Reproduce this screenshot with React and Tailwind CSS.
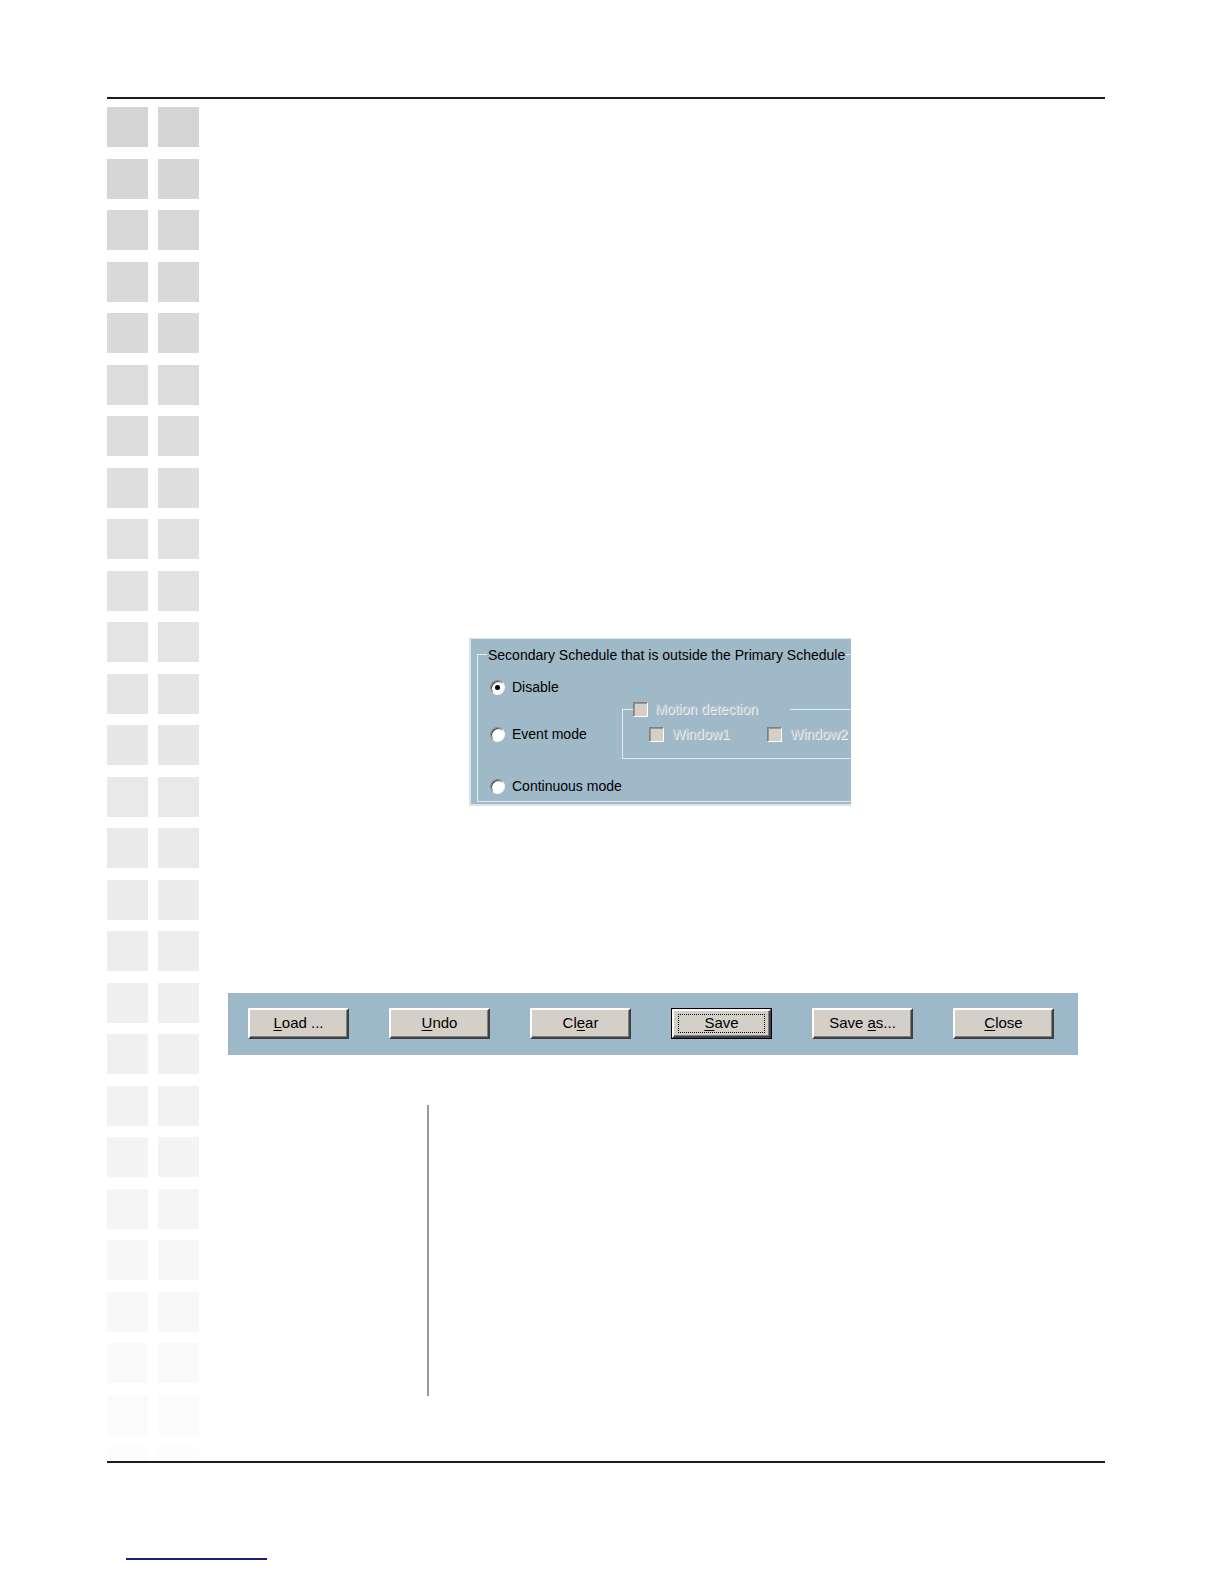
import React from 'react';

const PANEL = 'bg-[#a0b9c9]';

function Radio({ checked }) {
  return (
    <span className="inline-flex h-[15px] w-[15px] shrink-0 items-center justify-center rounded-full border border-t-[#7d8a92] border-l-[#7d8a92] border-r-[#f4f4f4] border-b-[#f4f4f4] bg-white shadow-[inset_1px_1px_0_#404040]">
      {checked && <span className="h-[5px] w-[5px] rounded-full bg-black" />}
    </span>
  );
}

function Check() {
  return (
    <span className="inline-block h-[15px] w-[15px] shrink-0 border border-t-[#808080] border-l-[#808080] border-r-white border-b-white bg-[#d4d0c8] shadow-[inset_1px_1px_0_#9a978f]" />
  );
}

function Dim({ children }) {
  return (
    <span className="text-[#bcc5ca] [text-shadow:1px_1px_0_#f2f4f5]">{children}</span>
  );
}

function Btn({ children, focused }) {
  const label = <span className="whitespace-pre">{children}</span>;
  return (
    <div className={`h-[31px] w-[101px] text-[15px] text-black ${focused ? 'border border-black' : ''}`}>
      <span className="flex h-full w-full items-center justify-center border-2 border-t-white border-l-white border-r-[#404040] border-b-[#404040] bg-[#d4d0c8] shadow-[inset_-1px_-1px_0_#808080]">
        {focused ? (
          <span className="flex h-[19px] w-[87px] items-center justify-center border border-dotted border-black">
            {label}
          </span>
        ) : (
          label
        )}
      </span>
    </div>
  );
}

const u = (s) => <span className="underline underline-offset-2">{s}</span>;

export default function App() {
  const rows = Array.from({ length: 27 }, (_, i) => i);

  return (
    <div className="w-full overflow-hidden bg-white pt-[97px] pb-[4px] font-['Liberation_Sans',Arial,sans-serif]">
      <div className="ml-[107px] h-[2px] w-[998px] bg-[#1c1c1c]" />

      <div className="ml-[107px] flex h-[1362px]">
        {/* decorative squares */}
        <div className="flex h-[1362px] w-[92px] shrink-0 flex-col gap-[11.5px] overflow-hidden pt-[8px]">
          {rows.map((i) => {
            const v = Math.round(212 + (i / 26) * 41);
            const c = `rgb(${v},${v},${v})`;
            return (
              <div key={i} className="flex shrink-0 gap-[10px]">
                <div className="h-[40px] w-[41px]" style={{ backgroundColor: c }} />
                <div className="h-[40px] w-[41px]" style={{ backgroundColor: c }} />
              </div>
            );
          })}
        </div>

        <div className="ml-[29px] flex w-[850px] flex-col">
          {/* schedule panel */}
          <div className={`ml-[241px] mt-[539px] h-[168px] w-[382px] overflow-hidden ${PANEL} border-l-2 border-b-2 border-t border-[#d9e4eb] pl-[6px] pt-[15px]`}>
            <div className="w-[420px] border-l border-t border-b border-[#e4ecf1] pb-[5px] pl-[12px] text-[14px] text-black">
              <div className={`-ml-[3px] -mt-[9px] h-[18px] w-fit ${PANEL} px-[1px] leading-[18px]`}>
                Secondary Schedule that is outside the Primary Schedule
              </div>

              <div className="mt-[13px] flex h-[20px] items-center gap-[7px]">
                <Radio checked />
                <span>Disable</span>
              </div>

              <div className="mt-[12px] flex items-center">
                <div className="flex w-[132px] items-center gap-[7px]">
                  <Radio />
                  <span>Event mode</span>
                </div>
                <div className="h-[50px] w-[260px] border-l border-t border-b border-[#e4ecf1] pl-[26px]">
                  <div className={`-ml-[16px] -mt-[8px] flex h-[15px] w-[157px] items-center gap-[7px] ${PANEL}`}>
                    <Check />
                    <Dim>Motion detection</Dim>
                  </div>
                  <div className="mt-[10px] flex h-[15px] items-center">
                    <div className="flex w-[118px] items-center gap-[8px]">
                      <Check />
                      <Dim>Window1</Dim>
                    </div>
                    <div className="flex items-center gap-[8px]">
                      <Check />
                      <Dim>Window2</Dim>
                    </div>
                  </div>
                </div>
              </div>

              <div className="mt-[17px] flex h-[20px] items-center gap-[7px]">
                <Radio />
                <span>Continuous mode</span>
              </div>
            </div>
          </div>

          {/* button bar */}
          <div className="mt-[187px] flex h-[62px] w-[850px] gap-[40px] bg-[#9db9c9] pl-[20px] pt-[15px]">
            <Btn>{u('L')}oad ...</Btn>
            <Btn>{u('U')}ndo</Btn>
            <Btn>Cl{u('e')}ar</Btn>
            <Btn focused>{u('S')}ave</Btn>
            <Btn>Save {u('a')}s...</Btn>
            <Btn>{u('C')}lose</Btn>
          </div>

          <div className="ml-[199px] mt-[50px] h-[291px] w-[2px] bg-[#9a9a9a]" />
        </div>
      </div>

      <div className="relative ml-[107px] h-[2px] w-[998px] bg-[#1c1c1c]" />

      <div className="ml-[126px] mt-[95px] h-[2px] w-[141px] bg-[#1d1d7e]" />
    </div>
  );
}
